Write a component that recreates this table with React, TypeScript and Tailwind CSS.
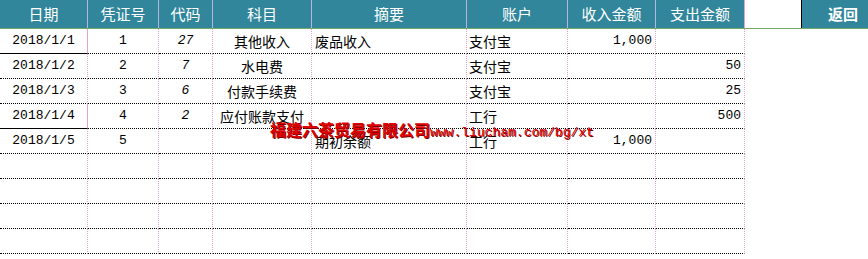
import React from 'react';

type Row = {
  date: string;
  no: string;
  code: string;
  subject: string;
  memo: string;
  account: string;
  income: string;
  expense: string;
  pinkFirst?: boolean;
};

const rows: Row[] = [
  { date: '2018/1/1', no: '1', code: '27', subject: '其他收入', memo: '废品收入', account: '支付宝', income: '1,000', expense: '', pinkFirst: true },
  { date: '2018/1/2', no: '2', code: '7', subject: '水电费', memo: '', account: '支付宝', income: '', expense: '50' },
  { date: '2018/1/3', no: '3', code: '6', subject: '付款手续费', memo: '', account: '支付宝', income: '', expense: '25' },
  { date: '2018/1/4', no: '4', code: '2', subject: '应付账款支付', memo: '', account: '工行', income: '', expense: '500', pinkFirst: true },
  { date: '2018/1/5', no: '5', code: '', subject: '', memo: '期初余额', account: '工行', income: '1,000', expense: '' },
  { date: '', no: '', code: '', subject: '', memo: '', account: '', income: '', expense: '' },
  { date: '', no: '', code: '', subject: '', memo: '', account: '', income: '', expense: '' },
  { date: '', no: '', code: '', subject: '', memo: '', account: '', income: '', expense: '' },
  { date: '', no: '', code: '', subject: '', memo: '', account: '', income: '', expense: '' },
];

const headers = [
  { label: '日期', w: 'w-[88px]' },
  { label: '凭证号', w: 'w-[71px]' },
  { label: '代码', w: 'w-[54px]' },
  { label: '科目', w: 'w-[99px]' },
  { label: '摘要', w: 'w-[155px]' },
  { label: '账户', w: 'w-[101px]' },
  { label: '收入金额', w: 'w-[88px]' },
  { label: '支出金额', w: 'w-[89px]' },
];

const cjk = "font-['Noto_Sans_CJK_SC',sans-serif] text-[14px]";
const mono = "font-['Liberation_Mono','Noto_Sans_CJK_SC',monospace] text-[13px]";
const cell = 'h-full flex items-center border-r border-[#e4a3cc] border-b border-b-black border-dotted shrink-0 text-black';

export default function App() {
  return (
    <div className="relative w-[868px] h-[259px] overflow-hidden bg-white select-none">
      {/* Header */}
      <div className="flex h-[29px] border-b border-[#74a866] text-white text-[15px] font-['Noto_Sans_CJK_SC',sans-serif]">
        {headers.map((h, i) => (
          <div
            key={h.label}
            className={`${h.w} shrink-0 flex items-center justify-center bg-[#31869b] ${i < headers.length - 1 ? 'border-r border-[#b9b4dc]' : 'border-r border-[#e4a3cc]'}`}
          >
            {h.label}
          </div>
        ))}
        <div className="w-[57px] shrink-0 bg-white border-r border-black" />
        <div className="flex-1 flex items-center justify-center pl-4 bg-[#31869b] font-bold">返回</div>
      </div>

      {/* Body */}
      {rows.map((r, i) => (
        <div key={i} className="flex h-[25px]">
          <div className={`${cell} w-[88px] justify-center ${mono} ${r.pinkFirst ? 'border-b-[#e4a3cc] border-solid' : ''}`}>{r.date}</div>
          <div className={`${cell} w-[71px] justify-center ${mono}`}>{r.no}</div>
          <div className={`${cell} w-[54px] justify-center ${mono} italic`}>{r.code}</div>
          <div className={`${cell} w-[99px] justify-center ${cjk}`}>{r.subject}</div>
          <div className={`${cell} w-[155px] pl-[3px] ${cjk}`}>{r.memo}</div>
          <div className={`${cell} w-[101px] pl-[2px] ${cjk}`}>{r.account}</div>
          <div className={`${cell} w-[88px] justify-end pr-[3px] ${mono}`}>{r.income}</div>
          <div className={`${cell} w-[89px] justify-end pr-[3px] ${mono}`}>{r.expense}</div>
        </div>
      ))}

      {/* Watermark */}
      <div className="absolute left-[270px] top-[117px] flex items-baseline text-[#e00000] font-bold [text-shadow:1px_1px_0_#7a0000] whitespace-nowrap">
        <span className="font-['Noto_Sans_CJK_SC',sans-serif] text-[16px] tracking-[0px]">福建六茶贸易有限公司</span>
        <span className="font-['Liberation_Mono',monospace] text-[13px] font-normal">www.liucham.com/bg/xt</span>
      </div>
    </div>
  );
}
